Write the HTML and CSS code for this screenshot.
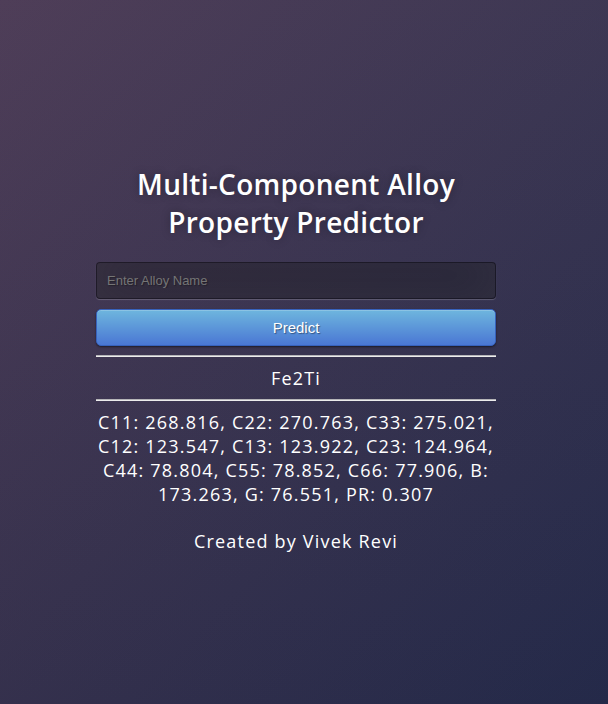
FILE: index.html
```html
<!DOCTYPE html>
<html lang="en">
<head>
<meta charset="utf-8">
<title>Multi-Component Alloy Property Predictor</title>
<link rel="stylesheet" href="styles.css">
</head>
<body>
<div class="login">
  <h1 class="title">Multi-Component Alloy Property Predictor</h1>
  <form class="form">
    <input class="alloy-input" type="text" name="alloy" placeholder="Enter Alloy Name">
    <button class="btn-predict" type="button">Predict</button>
  </form>
  <hr class="rule">
  <div class="alloy-name">Fe2Ti</div>
  <hr class="rule">
  <div class="results">C11: 268.816, C22: 270.763, C33: 275.021, C12: 123.547, C13: 123.922, C23: 124.964, C44: 78.804, C55: 78.852, C66: 77.906, B: 173.263, G: 76.551, PR: 0.307</div>
  <p class="credit">Created by Vivek Revi</p>
</div>
</body>
</html>
```
FILE: styles.css
```css
html, body {
  margin: 0;
  height: 100%;
}
body {
  font-family: "Open Sans", sans-serif;
  font-size: 18px;
  letter-spacing: 1.2px;
  color: #fff;
  text-align: center;
  background:
    linear-gradient(to bottom, rgba(255,255,255,0.02) 0%, rgba(0,0,0,0.04) 100%),
    linear-gradient(135deg, #4b3a55 0%, #383350 50%, #252b4c 100%);
  overflow: hidden;
}
.login {
  width: 400px;
  margin: 0 auto;
  padding-top: 165px;
  position: relative;
  left: -8px;
}
.title {
  margin: 0 0 21px;
  font-size: 28px;
  font-weight: 600;
  letter-spacing: 0.3px;
  text-shadow: 0 0 10px rgba(0,0,0,0.3);
}
.form {
  margin: 0;
}
.alloy-input {
  display: block;
  box-sizing: border-box;
  width: 100%;
  margin: 0 0 10px;
  padding: 10px;
  font-family: "Liberation Sans", Arial, sans-serif;
  font-size: 13px;
  letter-spacing: 0;
  color: #fff;
  background: rgba(0,0,0,0.3);
  border: 1px solid rgba(0,0,0,0.3);
  border-radius: 4px;
  outline: none;
  text-shadow: 1px 1px 1px rgba(0,0,0,0.3);
  box-shadow: inset 0 -5px 45px rgba(100,100,100,0.2), 0 1px 1px rgba(255,255,255,0.2);
}
.alloy-input::placeholder {
  color: #757575;
}
.btn-predict {
  display: block;
  box-sizing: border-box;
  width: 100%;
  padding: 9px 14px;
  font-family: "Liberation Sans", Arial, sans-serif;
  font-size: 15px;
  line-height: normal;
  letter-spacing: 0;
  color: #fff;
  text-shadow: 1px 1px 1px rgba(0,0,0,0.4);
  background-color: #4a77d4;
  background-image: linear-gradient(to bottom, #6eb6de, #4a77d4);
  border: 1px solid #3762bc;
  border-radius: 5px;
  box-shadow: inset 0 1px 0 rgba(255,255,255,0.2), 0 1px 2px rgba(0,0,0,0.5);
  cursor: pointer;
}
.rule {
  margin: 9px 0;
  height: 0;
  border: none;
  border-top: 1px solid #b5b5b8;
  border-bottom: 1px solid #ececec;
}
.alloy-name {
  line-height: normal;
}
.results {
  line-height: normal;
}
.credit {
  margin: 23px 0 0;
}
```
